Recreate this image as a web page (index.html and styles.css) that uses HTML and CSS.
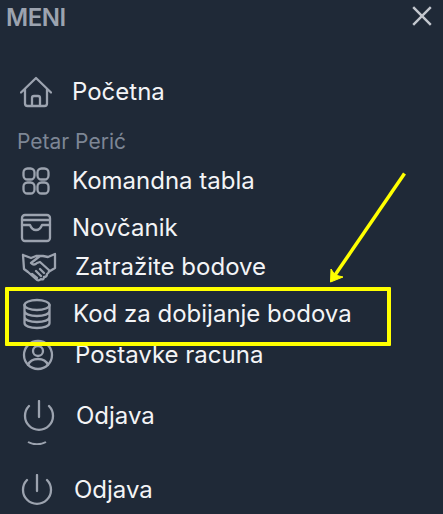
FILE: index.html
```html
<!DOCTYPE html>
<html lang="sr">
<head>
<meta charset="utf-8">
<title>Meni</title>
<link rel="stylesheet" href="styles.css">
</head>
<body>
<main class="menu">
  <header class="head">
    <h1 class="title">MENI</h1>
    <svg class="close" viewBox="0 0 20 20"><path d="M2 2L18 18M18 2L2 18"/></svg>
  </header>
  <nav class="list">
    <a class="row r-home"><svg class="ico" viewBox="0 0 32 32"><path d="M1 16.500L16 2l15 14.500M5 13v14.500a2.500 2.500 0 0 0 2.500 2.500h17a2.500 2.500 0 0 0 2.500-2.500V13M12 30v-8a2 2 0 0 1 2-2h4a2 2 0 0 1 2 2v8"/></svg><span>Početna</span></a>
    <div class="user">Petar Perić</div>
    <a class="row r-dash"><svg class="ico" viewBox="0 0 32 32"><rect x="3.500" y="3.500" width="11" height="11" rx="4"/><rect x="17.500" y="3.500" width="11" height="11" rx="4"/><rect x="3.500" y="17.500" width="11" height="11" rx="4"/><rect x="17.500" y="17.500" width="11" height="11" rx="4"/></svg><span>Komandna tabla</span></a>
    <a class="row r-wallet"><svg class="ico" viewBox="0 0 32 32"><rect x="2" y="3" width="28" height="26" rx="3"/><path d="M2 8h28M2 13h8c1.500 4 3 5 6 5s4.500-1 6-5h8"/></svg><span>Novčanik</span></a>
    <a class="row r-claim"><svg class="ico ico-wide" viewBox="0 0 36 32"><path d="M2 4l8 3 5-2h4l-9 7c2 2 4 2 6 0l3-1 10 9 5-3V3l-7 3-5-1h-4M2 4l1 14 4 3 9 8c2 1 3 0 4-1 2 1 3 0 3-2 2 0 3-1 3-3 2-1 2-2 2-3M11 23l5 4M15 20l5 5M19 18l4 4"/></svg><span>Zatražite bodove</span></a>
    <a class="row r-code"><svg class="ico" viewBox="0 0 32 32"><ellipse cx="16" cy="7" rx="12.500" ry="5"/><path d="M3.500 7v18c0 3 5.500 5 12.500 5s12.500-2 12.500-5V7M3.500 13c0 3 5.500 5 12.500 5s12.500-2 12.500-5M3.500 19c0 3 5.500 5 12.500 5s12.500-2 12.500-5"/></svg><span>Kod za dobijanje bodova</span></a>
    <a class="row r-settings"><svg class="ico" viewBox="0 0 32 32"><circle cx="16" cy="16" r="14"/><circle cx="16" cy="12" r="5"/><path d="M6 26c2-5 6-6 10-6s8 1 10 6"/></svg><span>Postavke racuna</span></a>
    <a class="row r-out1"><svg class="ico" viewBox="0 0 32 32"><path d="M16 1v16M6 6a14 14 0 1 0 20 0"/></svg><span>Odjava</span></a>
    <svg class="arc" viewBox="0 0 20 4"><path d="M1 1c5 3 13 3 18 0"/></svg>
    <a class="row r-out2"><svg class="ico" viewBox="0 0 32 32"><path d="M16 1v16M6 6a14 14 0 1 0 20 0"/></svg><span>Odjava</span></a>
  </nav>
</main>
<div class="mark"></div>
<svg class="arrow" viewBox="0 0 443 514"><path class="shaft" d="M404.500 173.500L333 278"/><path class="head-a" d="M330.500 282L331 269L335 275L343 277Z"/></svg>
</body>
</html>
```
FILE: styles.css
```css
* { box-sizing: border-box; }
html, body { margin: 0; height: 100%; }
body { background: #1f2937; font-family: Inter, "Noto Sans", sans-serif; overflow: hidden; position: relative; }
.menu { display: flex; flex-direction: column; height: 514px; }
.head { display: flex; justify-content: space-between; align-items: flex-start; padding: 4px 10px 0 6px; height: 72px; }
.title { margin: 0; font-size: 24px; line-height: 28px; font-weight: 600; color: #9ca3af; letter-spacing: -0.5px; }
.close { width: 22px; height: 22px; margin-top: 1px; fill: none; stroke: #c3c7ce; stroke-width: 2.200; }
.list { display: flex; flex-direction: column; }
.row { display: flex; align-items: center; height: 40px; font-size: 24px; line-height: 40px; color: #f3f4f6; }
.ico { width: 32px; height: 32px; flex: none; fill: none; stroke: #9ca3af; stroke-width: 2.300; stroke-linecap: round; stroke-linejoin: round; }
.ico-wide { width: 36px; }
.user { height: 24px; margin-top: 18px; font-size: 21px; line-height: 24px; color: #7d8695; padding-left: 17px; }
.row span { display: block; }
.r-home { padding-left: 20px; gap: 20px; }
.r-dash { margin-top: 7px; padding-left: 20px; gap: 20px; }
.r-wallet { margin-top: 7px; padding-left: 20px; gap: 20px; }
.r-claim { margin-top: -1px; padding-left: 21px; gap: 18px; }
.r-code { margin-top: 7px; padding-left: 21px; gap: 20px; }
.r-settings { margin-top: 1px; padding-left: 22px; gap: 21px; }
.r-out1 { margin-top: 21px; padding-left: 23px; gap: 21px; }
.arc { width: 20px; height: 4px; margin: 5px 0 0 27px; fill: none; stroke: #9ca3af; stroke-width: 2; display: block; }
.r-out2 { margin-top: 25px; padding-left: 21px; gap: 21px; }
.mark { position: absolute; left: 5px; top: 287px; width: 386px; height: 59px; border: 4px solid #ffff00; border-radius: 1px; }
.arrow { position: absolute; left: 0; top: 0; width: 443px; height: 514px; pointer-events: none; }
.shaft { stroke: #ffff00; stroke-width: 3.500; fill: none; }
.head-a { fill: #ffff00; stroke: #ffff00; stroke-width: 1; }
```
